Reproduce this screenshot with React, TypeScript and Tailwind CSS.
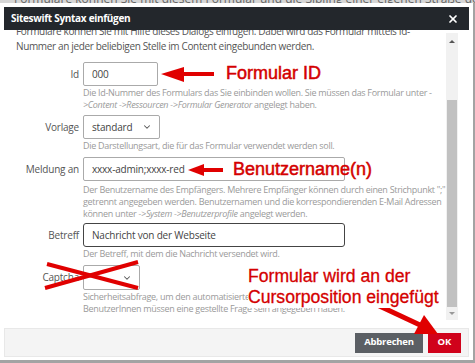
import React from "react";
import { X, ChevronDown } from "lucide-react";

const help = "text-[9px] tracking-[-0.3px] leading-[12px] text-[#9a9a9a] whitespace-nowrap";

function Row({ label, children }: { label: string; children: React.ReactNode }) {
  return (
    <div className="flex items-center">
      <div className="w-[63px] text-right text-[10px] tracking-[-0.2px] text-[#555] whitespace-nowrap">{label}</div>
      <div className="ml-[4px]">{children}</div>
    </div>
  );
}

function Help({ children }: { children: React.ReactNode }) {
  return <div className={`ml-[67px] mt-[1px] ${help}`}>{children}</div>;
}

const field = "text-[10px] tracking-[-0.2px] text-[#444]";

export default function App() {
  return (
    <div className="relative w-[475px] h-[363px] overflow-hidden bg-[#a3a3a3] font-['Open_Sans',sans-serif]">
      <div className="h-[3px] overflow-hidden bg-[#d6d6d6]">
        <div className="-mt-[10px] pl-[14px] text-[12px] text-[#666] whitespace-nowrap">
          Formulare können Sie mit diesem Formular und die Sibling einer eigenen Straße der
        </div>
      </div>
      <div className="w-[473px] h-[357px] bg-white pt-[4px] px-[4px] pb-[3px] flex flex-col">
        <div className="h-[23px] bg-[#23272c] flex items-center justify-between pl-[7px] pr-[10px]">
          <span className="text-white font-bold text-[10px] tracking-[-0.3px]">Siteswift Syntax einfügen</span>
          <X size={12} strokeWidth={3.5} color="#fff" />
        </div>
        <div className="flex-1 flex overflow-hidden">
          <div className="flex-1 overflow-hidden pl-[12px]">
            <div className="-mt-[6px] text-[10px] tracking-[-0.35px] leading-[15px] text-[#555] whitespace-nowrap">
              Formulare können Sie mit Hilfe dieses Dialogs einfügen. Dabei wird das Formular mittels Id-
              <br />
              Nummer an jeder beliebigen Stelle im Content eingebunden werden.
            </div>
            <div className="mt-[8px] flex flex-col">
              <Row label="Id">
                <div className={`w-[75px] h-[24px] border border-[#aaa] rounded-[2px] flex items-center px-[8px] ${field}`}>000</div>
              </Row>
              <Help>
                Die Id-Nummer des Formulars das Sie einbinden wollen. Sie müssen das Formular unter -
                <br />
                <i>&gt;Content -&gt;Ressourcen -&gt;Formular Generator</i> angelegt haben.
              </Help>
              <div className="h-[4px]" />
              <Row label="Vorlage">
                <div className={`w-[77px] h-[24px] border border-[#aaa] rounded-[2px] flex items-center justify-between pl-[8px] pr-[7px] ${field}`}>
                  <span>standard</span>
                  <ChevronDown size={10} strokeWidth={2.5} color="#555" />
                </div>
              </Row>
              <Help>Die Darstellungsart, die für das Formular verwendet werden soll.</Help>
              <div className="h-[5px]" />
              <Row label="Meldung an">
                <div className={`w-[262px] h-[24px] border border-[#aaa] rounded-[2px] flex items-center px-[8px] ${field}`}>xxxx-admin;xxxx-red</div>
              </Row>
              <div className="h-[2px]" />
              <Help>
                Der Benutzername des Empfängers. Mehrere Empfänger können durch einen Strichpunkt ";"
                <br />
                getrennt angegeben werden. Benutzernamen und die korrespondierenden E-Mail Adressen
                <br />
                können unter <i>-&gt;System -&gt;Benutzerprofile</i> angelegt werden.
              </Help>
              <div className="h-[3px]" />
              <Row label="Betreff">
                <div className={`w-[262px] h-[24px] border border-[#444] rounded-[3px] flex items-center px-[8px] ${field}`}>Nachricht von der Webseite</div>
              </Row>
              <Help>Der Betreff, mit dem die Nachricht versendet wird.</Help>
              <div className="h-[5px]" />
              <Row label="Captcha">
                <div className="w-[57px] h-[25px] border border-[#aaa] rounded-[2px] flex items-center justify-end pr-[7px]">
                  <ChevronDown size={10} strokeWidth={2.5} color="#555" />
                </div>
              </Row>
              <Help>
                Sicherheitsabfrage, um den automatisierten Versand von Nachrichten zu verhindern.
                <br />
                BenutzerInnen müssen eine gestellte Frage sein angegeben haben.
              </Help>
            </div>
          </div>
          <div className="w-[12px] mr-[11px] mt-[3px] mb-[8px] bg-[#f1f1f1] flex flex-col items-center">
            <div className="h-[17px] flex items-center justify-center">
              <div className="w-0 h-0 border-l-[3px] border-r-[3px] border-b-[3px] border-l-transparent border-r-transparent border-b-[#555]" />
            </div>
            <div className="h-[50px]" />
            <div className="w-[10px] h-[207px] bg-[#c1c1c1]" />
            <div className="flex-1 flex items-center justify-center">
              <div className="w-0 h-0 border-l-[3px] border-r-[3px] border-t-[3px] border-l-transparent border-r-transparent border-t-[#999]" />
            </div>
          </div>
        </div>
        <div className="h-[29px] bg-[#f4f4f4] border border-[#e8e8e8] flex items-center justify-end gap-[5px] pr-[7px]">
          <div className="w-[68px] h-[20px] bg-[#5b5f64] text-white font-bold text-[9.5px] tracking-[-0.2px] flex items-center justify-center">Abbrechen</div>
          <div className="w-[33px] h-[20px] bg-[#d0021b] text-white font-bold text-[9.5px] flex items-center justify-center">OK</div>
        </div>
      </div>

      <svg className="absolute left-0 top-0 pointer-events-none" width="475" height="363">
        <polygon points="161,74 184,67 184,82" fill="#e00000" />
        <rect x="183" y="72" width="31" height="4" fill="#e00000" />
        <polygon points="188,170 204,164 204,176" fill="#e00000" />
        <rect x="203" y="168" width="20" height="4" fill="#e00000" />
        <line x1="47" y1="264" x2="138" y2="288" stroke="#e00000" strokeWidth="4" />
        <line x1="45" y1="288" x2="138" y2="262" stroke="#e00000" strokeWidth="4" />
        <line x1="373" y1="303" x2="420" y2="325" stroke="#e00000" strokeWidth="5" />
        <polygon points="438,334 414,334 424,315" fill="#e00000" />
      </svg>
      <div className="absolute left-[226px] top-[63px] text-[18px] leading-[21px] text-[#d40000] [-webkit-text-stroke:0.5px_#d40000] font-['Liberation_Sans',Arial,sans-serif] whitespace-nowrap">
        Formular ID
      </div>
      <div className="absolute left-[233px] top-[159px] text-[18px] leading-[21px] text-[#d40000] [-webkit-text-stroke:0.5px_#d40000] font-['Liberation_Sans',Arial,sans-serif] whitespace-nowrap">
        Benutzername(n)
      </div>
      <div className="absolute left-[248px] top-[266px] text-[17.6px] leading-[21px] text-[#d40000] [-webkit-text-stroke:0.3px_#d40000] font-['Liberation_Sans',Arial,sans-serif] whitespace-nowrap bg-white">
        Formular wird an der
        <br />
        Cursorposition eingefügt
      </div>
    </div>
  );
}
